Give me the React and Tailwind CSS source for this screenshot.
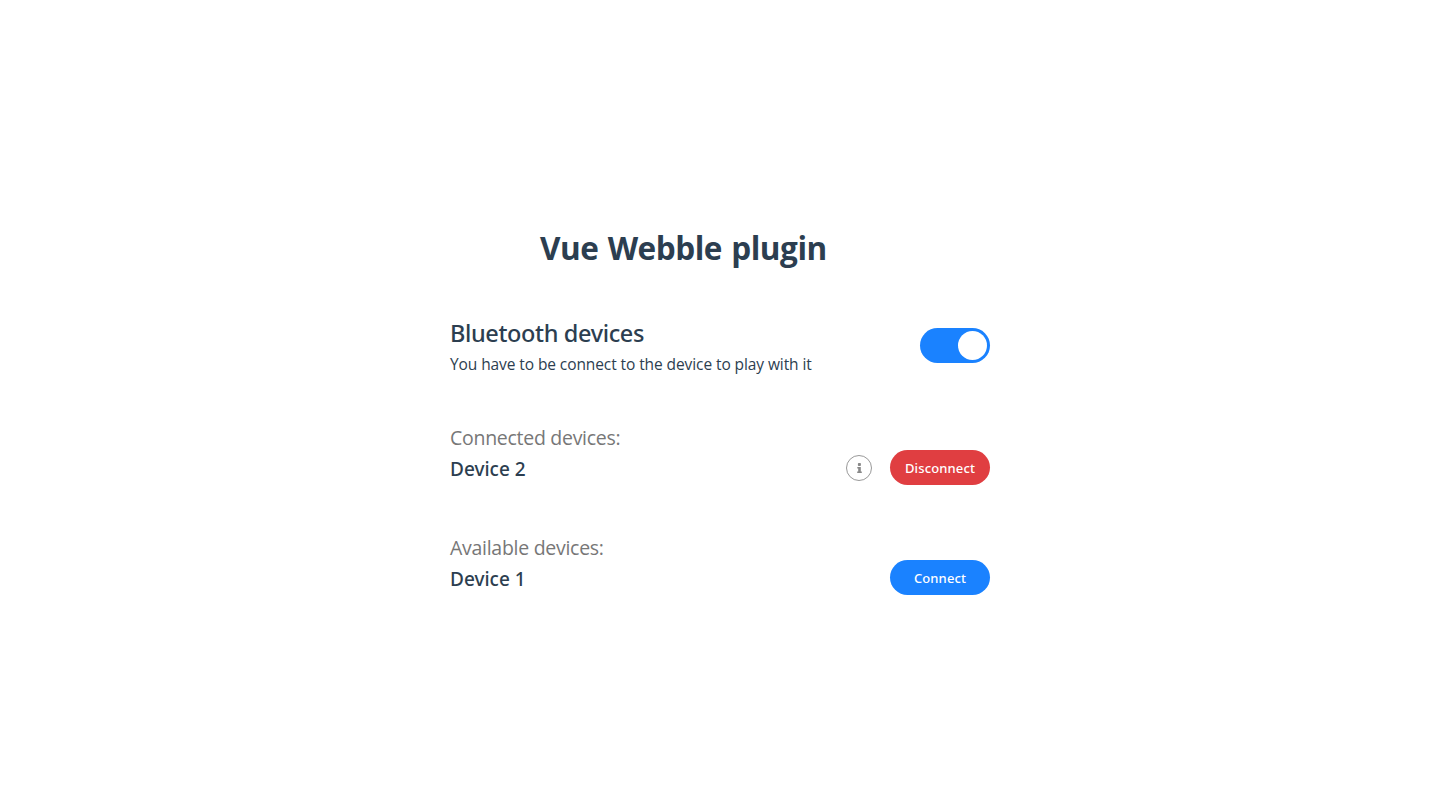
import React from 'react';

function PillButton({ className, children }) {
  return (
    <button
      className={`flex h-[35px] w-[100px] items-center justify-center rounded-full pt-0.5 font-['Noto_Sans',sans-serif] text-[13px] font-medium leading-none tracking-[0.12px] text-white ${className}`}
    >
      {children}
    </button>
  );
}

function InfoButton() {
  return (
    <button className="flex size-[26px] items-center justify-center rounded-full border border-[#999999]">
      <svg viewBox="0 0 5 10" className="h-[10px] w-[5px]" fill="#888888">
        <rect x="0.9" y="0" width="3" height="3" rx="0.8" />
        <path d="M0.3 4H3.8V8.4H4.8V10H0.2V8.4H1.2V5.5H0.3Z" />
      </svg>
    </button>
  );
}

function DeviceSection({ title, name, children }) {
  return (
    <section className="flex h-[60px] w-full items-end justify-between">
      <div className="flex flex-col whitespace-nowrap">
        <h3 className="h-[31px] text-[19.5px] leading-[26px] tracking-[-0.28px] text-[#777777]">{title}</h3>
        <p className="h-[29px] font-['Noto_Sans',sans-serif] text-[19px] font-medium leading-[26px]">{name}</p>
      </div>
      <div className="flex items-center gap-[18px]">{children}</div>
    </section>
  );
}

export default function App() {
  return (
    <main className="flex h-[810px] w-full flex-col items-center bg-white pt-[225px] font-['Open_Sans',sans-serif] text-[#2c3e50]">
      <div className="flex w-[540px] flex-col">
        <h1 className="ml-[90px] h-[90px] whitespace-nowrap text-[31.5px] font-bold leading-[46px] tracking-[-0.46px] [word-spacing:1.5px]">Vue Webble plugin</h1>
        <header className="flex h-[110px] justify-between">
          <div className="flex flex-col whitespace-nowrap">
            <h2 className="h-[36px] font-['Noto_Sans',sans-serif] text-[23.5px] font-medium leading-[36px] tracking-[-0.37px]">Bluetooth devices</h2>
            <p className="text-[15.5px] leading-[26px] tracking-[-0.09px]">You have to be connect to the device to play with it</p>
          </div>
          <button className="mt-[13px] flex h-[35px] w-[70px] items-center justify-end rounded-full bg-[#1a82ff] pr-[3px]">
            <span className="size-[29px] rounded-full bg-white" />
          </button>
        </header>
        <div className="flex flex-col gap-[50px]">
          <DeviceSection title="Connected devices:" name="Device 2">
            <InfoButton />
            <PillButton className="bg-[#e03e41]">Disconnect</PillButton>
          </DeviceSection>
          <DeviceSection title="Available devices:" name="Device 1">
            <PillButton className="bg-[#1a82ff]">Connect</PillButton>
          </DeviceSection>
        </div>
      </div>
    </main>
  );
}
